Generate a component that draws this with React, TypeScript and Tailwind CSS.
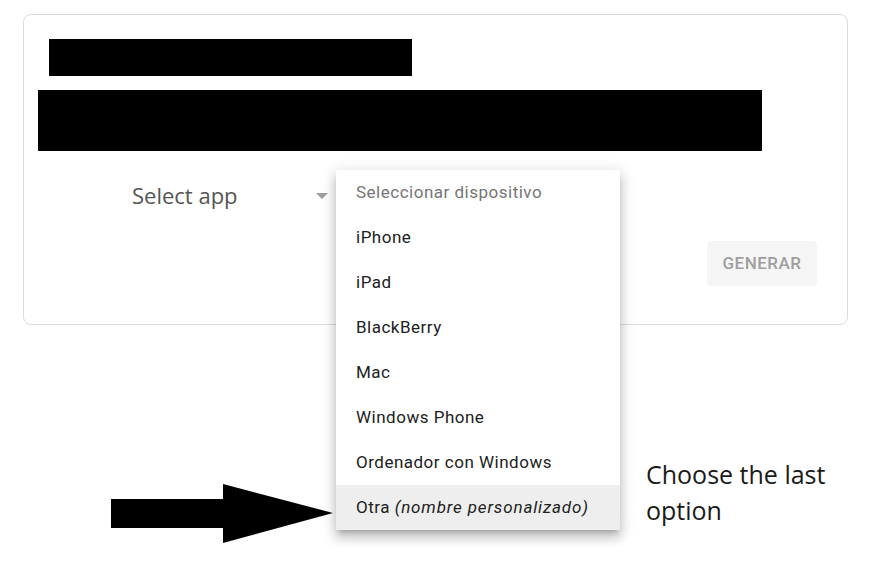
import React from "react";

const items = ["iPhone", "iPad", "BlackBerry", "Mac", "Windows Phone", "Ordenador con Windows"];

export default function App() {
  return (
    <div className="relative w-[871px] h-[563px] bg-white overflow-hidden">
      <div className="ml-[23px] mt-[14px] w-[825px] h-[311px] border border-[#dadce0] rounded-[8px] flex flex-col">
        <div className="ml-[25px] mt-[24px] w-[363px] h-[37px] bg-black" />
        <div className="ml-[14px] mt-[14px] w-[724px] h-[61px] bg-black" />
        <div className="mt-[22px] h-[45px] flex items-center">
          <span
            className="ml-[108px] text-[22px] text-[#555555]"
            style={{ fontFamily: '"Open Sans", sans-serif' }}
          >
            Select app
          </span>
          <svg className="ml-[78px]" width="12" height="6" viewBox="0 0 12 6">
            <polygon points="0,0 12,0 6,6" fill="#9e9e9e" />
          </svg>
        </div>
        <div className="mt-[23px] flex justify-end pr-[30px]">
          <div
            className="w-[110px] h-[45px] rounded-[4px] bg-[#f5f5f5] flex items-center justify-center text-[17px] tracking-[0.5px] font-medium text-[#9e9e9e]"
            style={{ fontFamily: "Roboto, sans-serif" }}
          >
            GENERAR
          </div>
        </div>
      </div>

      <div
        className="absolute left-[336px] top-[170px] w-[284px] bg-white shadow-[0_5px_5px_-3px_rgba(0,0,0,0.2),0_8px_10px_1px_rgba(0,0,0,0.14),0_3px_14px_2px_rgba(0,0,0,0.12)] flex flex-col"
        style={{ fontFamily: "Roboto, sans-serif" }}
      >
        <div className="h-[45px] px-[20px] flex items-center text-[17px] tracking-[0.5px] text-[#757575]">
          Seleccionar dispositivo
        </div>
        {items.map((t) => (
          <div key={t} className="h-[45px] px-[20px] flex items-center text-[17px] tracking-[0.5px] text-[#212121]">
            {t}
          </div>
        ))}
        <div className="h-[45px] px-[20px] flex items-center text-[17px] tracking-[0.5px] text-[#212121] bg-[#eeeeee] whitespace-nowrap">
          Otra&nbsp;<i className="tracking-[0.85px]">(nombre personalizado)</i>
        </div>
      </div>

      <svg className="absolute left-[110px] top-[483px]" width="226" height="62" viewBox="0 0 226 62">
        <polygon points="1,16 113,16 113,1 223,30 113,60 113,45 1,45" fill="#000" />
      </svg>

      <div
        className="absolute left-[646px] top-[456px] text-[25px] leading-[36px] text-[#1a1a1a]"
        style={{ fontFamily: '"Open Sans", sans-serif' }}
      >
        Choose the last
        <br />
        option
      </div>
    </div>
  );
}
